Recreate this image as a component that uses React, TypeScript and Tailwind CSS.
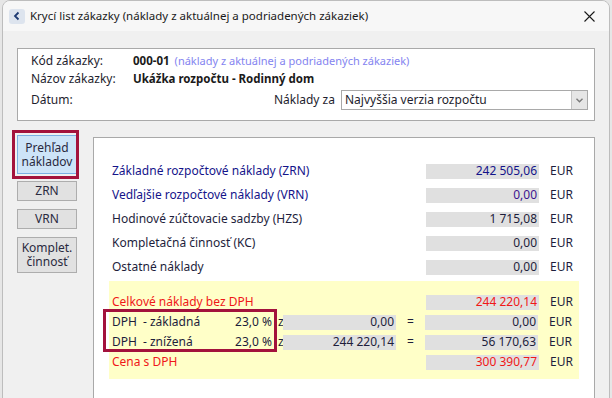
import React from 'react';

type Row = { label: string; value: string; labelColor: string; valueColor: string };

const costRows: Row[] = [
  { label: 'Základné rozpočtové náklady (ZRN)', value: '242 505,06', labelColor: 'text-[#14148a]', valueColor: 'text-[#14148a]' },
  { label: 'Vedľajšie rozpočtové náklady (VRN)', value: '0,00', labelColor: 'text-[#14148a]', valueColor: 'text-[#3c1490]' },
  { label: 'Hodinové zúčtovacie sadzby (HZS)', value: '1 715,08', labelColor: 'text-[#1e1e3c]', valueColor: 'text-[#1e1e3c]' },
  { label: 'Kompletačná činnosť (KC)', value: '0,00', labelColor: 'text-[#1e1e3c]', valueColor: 'text-[#1e1e3c]' },
  { label: 'Ostatné náklady', value: '0,00', labelColor: 'text-[#1e1e3c]', valueColor: 'text-[#1e1e3c]' },
];

function ValueBox({ value, color }: { value: string; color: string }) {
  return (
    <div className={`w-[113px] h-[15px] shrink-0 bg-[#e0e0e0] flex items-center justify-end pr-[2px] ${color}`}>
      {value}
    </div>
  );
}

function Eur() {
  return <div className="w-[40px] shrink-0 pl-[11px] text-[#1e1e3c]">EUR</div>;
}

function SideButton({ children, active }: { children: React.ReactNode; active?: boolean }) {
  return (
    <div
      className={
        active
          ? 'relative w-[60px] h-[39px] bg-[#cde4f8] border border-[#7aafe3] flex items-center justify-center text-center leading-[14px] text-[#2a2a40]'
          : 'w-[60px] bg-[#e1e1e1] border border-[#adadad] flex items-center justify-center text-center leading-[14px] text-[#2a2a40]'
      }
    >
      {children}
      {active && <div className="absolute -left-[6px] -right-[3px] -top-[6px] -bottom-[6px] border-[3px] border-[#a3123c]" />}
    </div>
  );
}

function DphRow({ kind, base, result }: { kind: string; base: string; result: string }) {
  return (
    <div className="h-[20px] flex items-center">
      <div className="w-[174px] shrink-0 flex items-center pl-[3px] text-[#1e1e3c]">
        <span className="w-[31px]">DPH</span>
        <span className="flex-1">- {kind}</span>
        <span>23,0 %</span>
        <span className="w-[11px] pl-[6px]">z</span>
      </div>
      <ValueBox value={base} color="text-[#1e1e3c]" />
      <div className="w-[29px] shrink-0 text-center text-[#1e1e3c]">=</div>
      <ValueBox value={result} color="text-[#1e1e3c]" />
      <Eur />
    </div>
  );
}

export default function App() {
  return (
    <div className="w-[612px] h-[398px] overflow-hidden bg-[#e6e6e6] pl-[2px] font-['Noto_Sans',sans-serif] text-[12px]">
      <div className="w-[608px] h-[420px] border border-[#bdbdbd] rounded-t-[8px] overflow-hidden bg-[#f0f0f0] flex flex-col">
        {/* Title bar */}
        <div className="h-[30px] shrink-0 bg-[#f7f7f7] flex items-center pl-[6px] pr-[8px]">
          <div className="w-[16px] h-[15px] rounded-[3px] bg-[#dde4ee] flex items-center justify-center">
            <svg width="8" height="10" viewBox="0 0 8 10">
              <path d="M5.5 1.5 L2 5 L5.5 8.5" fill="none" stroke="#1f3b73" strokeWidth="1.8" />
            </svg>
          </div>
          <div className="ml-[5px] text-[11.5px] text-[#1a1a1a]">
            Krycí list zákazky (náklady z aktuálnej a podriadených zákaziek)
          </div>
          <div className="ml-auto w-[24px] h-[20px] flex items-center justify-center">
            <svg width="11" height="11" viewBox="0 0 11 11">
              <path d="M0.5 0.5 L10.5 10.5 M10.5 0.5 L0.5 10.5" stroke="#1a1a1a" strokeWidth="1.1" />
            </svg>
          </div>
        </div>

        <div className="flex-1 px-[14px] pt-[17px]">
          {/* Header panel */}
          <div className="h-[73px] bg-white border border-[#a9a9a9] pl-[13px] pr-[6px] pt-[3px]">
            <div className="h-[18px] flex items-center">
              <span className="w-[102px] text-[#1e1e2e]">Kód zákazky:</span>
              <span className="font-bold text-[11.5px] text-[#1a1a1a]">000-01</span>
              <span className="ml-[5px] text-[11px] text-[#8484f0]">(náklady z aktuálnej a podriadených zákaziek)</span>
            </div>
            <div className="h-[18px] flex items-center">
              <span className="w-[102px] text-[#1e1e2e]">Názov zákazky:</span>
              <span className="font-bold text-[11.5px] text-[#1a1a1a]">Ukážka rozpočtu - Rodinný dom</span>
            </div>
            <div className="h-[24px] flex items-center">
              <span className="text-[#1e1e2e]">Dátum:</span>
              <span className="ml-auto mr-[6px] text-[#1e1e2e]">Náklady za</span>
              <div className="w-[247px] h-[20px] border border-[#a9a9a9] flex items-stretch">
                <div className="flex-1 pl-[3px] flex items-center text-[#1e1e2e]">Najvyššia verzia rozpočtu</div>
                <div className="w-[16px] bg-[#e6e6e6] border-l border-[#c4c4c4] flex items-center justify-center">
                  <svg width="7" height="5" viewBox="0 0 7 5">
                    <path d="M0.5 0.8 L3.5 3.8 L6.5 0.8" fill="none" stroke="#7a7a7a" strokeWidth="1.4" />
                  </svg>
                </div>
              </div>
            </div>
          </div>

          {/* Lower section */}
          <div className="flex items-start mt-[14px]">
            <div className="w-[60px] shrink-0 flex flex-col gap-[7px]">
              <SideButton active>Prehľad<br />nákladov</SideButton>
              <div className="h-[20px] flex">
                <SideButton>ZRN</SideButton>
              </div>
              <div className="h-[20px] flex mt-[1px]">
                <SideButton>VRN</SideButton>
              </div>
              <div className="h-[36px] flex mt-[1px]">
                <SideButton>Komplet.<br />činnosť</SideButton>
              </div>
            </div>

            <div className="ml-[16px] mt-[2px] flex-1 h-[280px] bg-white border border-[#a9a9a9] px-[15px] pt-[21px]">
              {costRows.map((r) => (
                <div key={r.label} className="h-[24px] flex items-center">
                  <div className={`flex-1 pl-[3px] ${r.labelColor}`}>{r.label}</div>
                  <ValueBox value={r.value} color={r.valueColor} />
                  <Eur />
                </div>
              ))}

              <div className="mt-[2px] bg-[#ffffc8] pt-[11px] pb-[7px]">
                <div className="h-[20px] flex items-center">
                  <div className="flex-1 pl-[3px] text-[#f01818]">Celkové náklady bez DPH</div>
                  <ValueBox value="244 220,14" color="text-[#f01818]" />
                  <Eur />
                </div>
                <div className="relative">
                  <DphRow kind="základná" base="0,00" result="0,00" />
                  <DphRow kind="znížená" base="244 220,14" result="56 170,63" />
                  <div className="absolute left-[-6px] top-[-3px] bottom-0 w-[174px] border-[3px] border-[#a3123c]" />
                </div>
                <div className="h-[20px] flex items-center">
                  <div className="flex-1 pl-[3px] text-[#f01818]">Cena s DPH</div>
                  <ValueBox value="300 390,77" color="text-[#f01818]" />
                  <Eur />
                </div>
              </div>
            </div>
          </div>
        </div>
      </div>
    </div>
  );
}
